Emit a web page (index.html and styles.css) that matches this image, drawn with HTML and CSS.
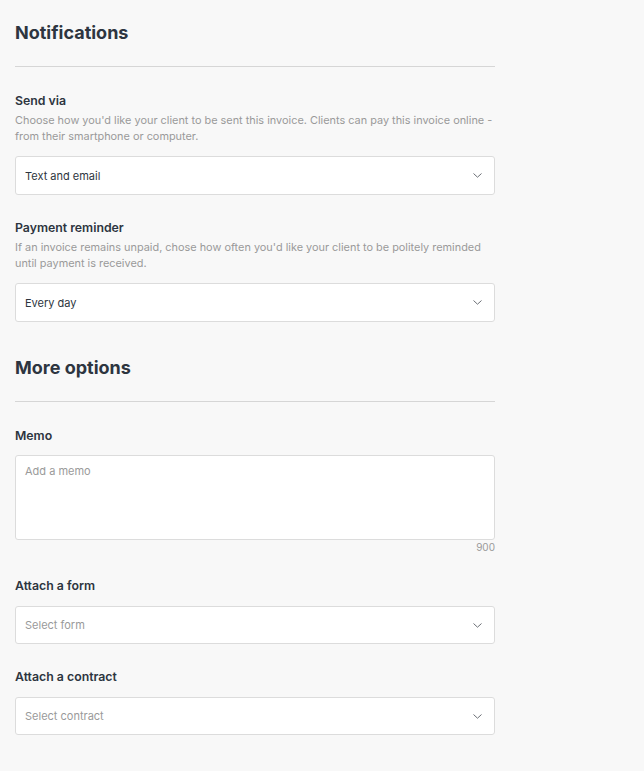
FILE: index.html
```html
<!DOCTYPE html>
<html lang="en">
  <head>
    <meta charset="UTF-8" />
    <meta name="viewport" content="width=device-width, initial-scale=1.0" />
    <title>Invoice settings</title>
    <link rel="stylesheet" href="styles.css">
  </head>

  <body>
    <div class="all">
      <div class="section">
        <div class="section-title">Notifications</div>

        <div class="field">
          <div class="label">Send via</div>
          <div class="hint">
            Choose how you'd like your client to be sent this invoice. Clients can pay this invoice online -
            from their smartphone or computer.
          </div>
          <div class="select">
            <span>Text and email</span>
            <svg class="chevron" width="9" height="5" viewBox="0 0 9 5"><path d="M0.5 0.5 L4.5 4.2 L8.5 0.5" /></svg>
          </div>
        </div>

        <div class="field">
          <div class="label">Payment reminder</div>
          <div class="hint">
            If an invoice remains unpaid, chose how often you'd like your client to be politely reminded
            until payment is received.
          </div>
          <div class="select">
            <span>Every day</span>
            <svg class="chevron" width="9" height="5" viewBox="0 0 9 5"><path d="M0.5 0.5 L4.5 4.2 L8.5 0.5" /></svg>
          </div>
        </div>
      </div>

      <div class="section">
        <div class="section-title">More options</div>

        <div class="field memo-field">
          <div class="label">Memo</div>
          <div class="memo">Add a memo</div>
          <div class="counter">900</div>
        </div>

        <div class="field">
          <div class="label">Attach a form</div>
          <div class="select placeholder">
            <span>Select form</span>
            <svg class="chevron" width="9" height="5" viewBox="0 0 9 5"><path d="M0.5 0.5 L4.5 4.2 L8.5 0.5" /></svg>
          </div>
        </div>

        <div class="field">
          <div class="label">Attach a contract</div>
          <div class="select placeholder">
            <span>Select contract</span>
            <svg class="chevron" width="9" height="5" viewBox="0 0 9 5"><path d="M0.5 0.5 L4.5 4.2 L8.5 0.5" /></svg>
          </div>
        </div>
      </div>
    </div>
  </body>
</html>
```

FILE: styles.css
```css
body {
  margin: 0;
  background-color: #f8f8f8;
  font-family: 'Inter', 'Liberation Sans', sans-serif;
  color: #2d3540;
}

.all {
  width: 480px;
  padding: 20px 15px 0 15px;
}

.section-title {
  font-size: 18px;
  font-weight: 700;
  line-height: 24px;
  padding-top: 1px;
  padding-bottom: 21px;
  border-bottom: 1px solid #d6d6d6;
  margin-bottom: 26px;
}

.section {
  margin-bottom: 33px;
}

.field {
  margin-bottom: 25px;
}

.memo-field {
  margin-bottom: 24px;
}

.label {
  font-size: 12.3px;
  font-weight: 600;
  line-height: 16px;
  margin-bottom: 3px;
}

.hint {
  font-size: 10.9px;
  line-height: 16px;
  color: #9a9a9a;
  margin-bottom: 12px;
}

.select {
  display: flex;
  justify-content: space-between;
  align-items: center;
  height: 37px;
  padding: 0 12px 0 9px;
  background-color: #fff;
  border: 1px solid #dcdcdc;
  border-radius: 3px;
  font-size: 11px;
  color: #2d3540;
}

.placeholder {
  height: 36px;
  color: #9a9a9a;
  margin-top: 12px;
}

.chevron path {
  fill: none;
  stroke: #6b6f75;
  stroke-width: 1;
}

.memo {
  height: 70px;
  margin-top: 11px;
  padding: 8px 9px 5px 9px;
  background-color: #fff;
  border: 1px solid #dcdcdc;
  border-radius: 3px;
  font-size: 11px;
  line-height: 14px;
  color: #9a9a9a;
}

.counter {
  text-align: right;
  font-size: 10px;
  line-height: 14px;
  color: #9a9a9a;
}
```
